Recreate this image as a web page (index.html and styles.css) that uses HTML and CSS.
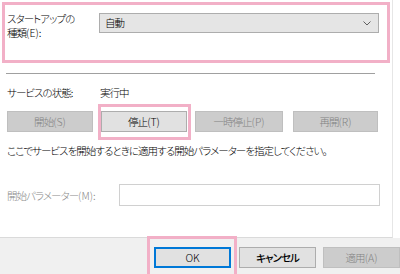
FILE: index.html
```html
<!DOCTYPE html>
<html lang="ja">
<head>
<meta charset="utf-8">
<link rel="stylesheet" href="styles.css">
</head>
<body>
<div class="panel">
  <div class="startup">
    <div class="startup-label"><div>スタートアップの</div><div>種類<span class="l">(E):</span></div></div>
    <div class="combo">
      <span class="combo-text">自動</span>
      <svg class="chev" width="8" height="5" viewBox="0 0 8 5"><polyline points="0.5,0.5 4,4 7.5,0.5" fill="none" stroke="#606060" stroke-width="1"/></svg>
    </div>
  </div>
  <div class="sep"></div>
  <div class="status">
    <span class="status-label">サービスの状態<span class="l">:</span></span>
    <span class="status-value">実行中</span>
  </div>
  <div class="btnrow">
    <button class="btn disabled w86">開始<span class="l">(S)</span></button>
    <button class="btn w86 hl">停止<span class="l">(T)</span></button>
    <button class="btn disabled w88">一時停止<span class="l">(P)</span></button>
    <button class="btn disabled w85 last">再開<span class="l">(R)</span></button>
  </div>
  <div class="desc">ここでサービスを開始するときに適用する開始パラメーターを指定してください。</div>
  <div class="param">
    <span class="param-label">開始パラメーター<span class="l">(M):</span></span>
    <div class="param-input"></div>
  </div>
</div>
<div class="footer">
  <button class="btn fbtn ok hl2"><span class="l">OK</span></button>
  <button class="btn fbtn cancel">キャンセル</button>
  <button class="btn fbtn disabled">適用<span class="l">(A)</span></button>
</div>
</body>
</html>
```
FILE: styles.css
```css
html, body {
  margin: 0;
  padding: 0;
}
body {
  width: 400px;
  height: 274px;
  overflow: hidden;
  background: #ffffff;
  font-family: "Noto Sans CJK JP", "Noto Sans", sans-serif;
  font-size: 10.5px;
  font-weight: 300;
  letter-spacing: -0.95px;
  font-feature-settings: "palt";
  color: #000;
}
.l { letter-spacing: 0; }
.panel {
  width: 392px;
  height: 235px;
  border-right: 1px solid #e6e6e6;
  border-bottom: 1px solid #dadada;
  padding-top: 2px;
  box-sizing: content-box;
  background: #fff;
}
.panel > * { box-sizing: border-box; }
.startup {
  margin-left: 2px;
  width: 388px;
  height: 61px;
  border: 3px solid #f2b0c7;
  display: flex;
  align-items: flex-start;
  padding: 7px 0 0 2px;
}
.startup-label {
  width: 92px;
  line-height: 14px;
}
.combo {
  width: 280px;
  height: 20px;
  margin-top: 1px;
  box-sizing: border-box;
  background: #e5e5e5;
  border: 1px solid #adadad;
  display: flex;
  align-items: center;
  justify-content: space-between;
  padding: 0 7px 0 5px;
  line-height: 16px;
}
.chev { display: block; }
.sep {
  margin: 10px 0 0 6px;
  width: 369px;
  height: 1px;
  background: #a0a0a0;
}
.status {
  margin-top: 11px;
  padding-left: 7px;
  display: flex;
  line-height: 15px;
  height: 15px;
}
.status-label { width: 93px; }
.btnrow {
  margin-top: 11px;
  padding-left: 7px;
  display: flex;
  gap: 8px;
  height: 21px;
}
.btn {
  font: inherit;
  letter-spacing: inherit;
  font-feature-settings: "palt";
  box-sizing: border-box;
  height: 21px;
  margin: 0;
  padding: 0;
  background: #e1e1e1;
  border: 1px solid #adadad;
  color: #000;
  line-height: 17px;
  position: relative;
}
.btn.disabled {
  background: #cccccc;
  border-color: #bfbfbf;
  color: #838383;
}
.cancel { font-weight: 500; }
.w86 { width: 86px; }
.w88 { width: 88px; }
.w85 { width: 85px; }
.last { margin-left: 2px; }
.hl::after {
  content: "";
  position: absolute;
  left: -4px;
  top: -8px;
  right: -5px;
  bottom: -9px;
  border: 3px solid #f2b0c7;
}
.desc {
  margin-top: 11px;
  padding-left: 7px;
  line-height: 15px;
  white-space: nowrap;
}
.param {
  margin-top: 26px;
  padding-left: 7px;
  display: flex;
  align-items: center;
  height: 22px;
}
.param-label {
  width: 112px;
  color: #8a8a8a;
}
.param-input {
  width: 261px;
  height: 22px;
  box-sizing: border-box;
  border: 1px solid #d0d0d0;
  background: #fff;
}
.footer {
  height: 38px;
  background: #f0f0f0;
  display: flex;
  gap: 8px;
  padding: 9px 0 0 154px;
  box-sizing: border-box;
  overflow: visible;
}
.fbtn {
  width: 77px;
  flex: none;
}
.fbtn.disabled { margin-left: -1px; }
.ok {
  border: 1px solid #0078d7;
  box-shadow: inset 0 0 0 1px #0078d7;
}
.hl2::after {
  content: "";
  position: absolute;
  left: -8px;
  top: -12px;
  right: -7px;
  bottom: -12px;
  border: 3px solid #f2b0c7;
}
```
